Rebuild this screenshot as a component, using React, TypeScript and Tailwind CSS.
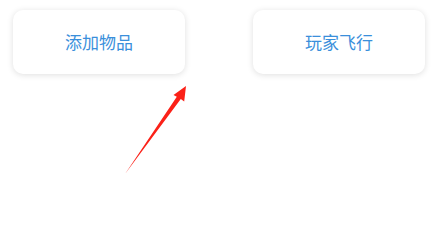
import React from 'react';

const App: React.FC = () => {
  const actions = ['添加物品', '玩家飞行'];

  return (
    <div className="relative w-[447px] h-[238px] bg-white overflow-hidden font-['Noto_Sans_CJK_SC',sans-serif]">
      <div className="flex gap-[68px] pl-[13px] pt-[10px]">
        {actions.map((label) => (
          <button
            key={label}
            className="w-[172px] h-[64px] rounded-[10px] bg-white shadow-[0_1px_6px_rgba(0,0,0,0.13)] text-[17px] text-[#3a8fdb] flex items-center justify-center"
          >
            {label}
          </button>
        ))}
      </div>

      {/* red pointer arrow */}
      <svg className="absolute left-0 top-0" width="447" height="238" viewBox="0 0 447 238">
        <polygon
          points="125,174 180.8,99 184.2,101.4 186,86 173.5,95 176.8,96.8"
          fill="#fb2118"
        />
      </svg>
    </div>
  );
};

export default App;
